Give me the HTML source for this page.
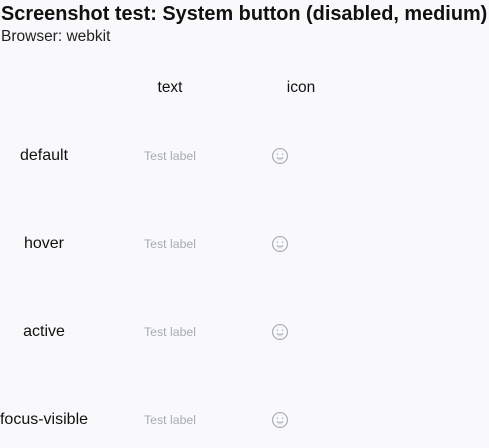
<!DOCTYPE html>
<html><head><style>
body{margin:0;background:#f9f9fb;font-family:"Liberation Sans",sans-serif;color:#111;width:489px;height:448px;overflow:hidden;position:relative}
.a{position:absolute;white-space:nowrap}
h1{position:absolute;left:1px;top:3px;margin:0;font-size:19.9px;font-weight:bold;white-space:nowrap}
.sub{left:1px;top:28px;font-size:15.5px;color:#222}
.hd{font-size:15.5px;top:79px;transform:translateX(-50%)}
.lb{font-size:16px;transform:translateX(-50%)}
.tl{font-size:12.3px;color:#a3abb5;transform:translateX(-50%)}
.ic{transform:translate(-50%,-50%)}
</style></head><body>
<h1>Screenshot test: System button (disabled, medium)</h1>
<div class="a sub">Browser: webkit</div>
<div class="a hd" style="left:170px">text</div>
<div class="a hd" style="left:301px">icon</div>
<div class="a lb" style="left:44px;top:147px">default</div>
<div class="a lb" style="left:44px;top:235px">hover</div>
<div class="a lb" style="left:44px;top:323px">active</div>
<div class="a lb" style="left:44px;top:411px">focus-visible</div>
<div class="a tl" style="left:170px;top:149px">Test label</div>
<div class="a tl" style="left:170px;top:237px">Test label</div>
<div class="a tl" style="left:170px;top:325px">Test label</div>
<div class="a tl" style="left:170px;top:413px">Test label</div>
<svg class="a ic" style="left:280px;top:156px" width="17" height="17" viewBox="0 0 16 16" fill="none" stroke="#a3abb5" stroke-width="1.1"><circle cx="8" cy="8" r="7"/><path d="M5 6.3h1.3M9.7 6.3H11M5 9.5q3 2.6 6 0"/></svg>
<svg class="a ic" style="left:280px;top:244px" width="17" height="17" viewBox="0 0 16 16" fill="none" stroke="#a3abb5" stroke-width="1.1"><circle cx="8" cy="8" r="7"/><path d="M5 6.3h1.3M9.7 6.3H11M5 9.5q3 2.6 6 0"/></svg>
<svg class="a ic" style="left:280px;top:332px" width="17" height="17" viewBox="0 0 16 16" fill="none" stroke="#a3abb5" stroke-width="1.1"><circle cx="8" cy="8" r="7"/><path d="M5 6.3h1.3M9.7 6.3H11M5 9.5q3 2.6 6 0"/></svg>
<svg class="a ic" style="left:280px;top:420px" width="17" height="17" viewBox="0 0 16 16" fill="none" stroke="#a3abb5" stroke-width="1.1"><circle cx="8" cy="8" r="7"/><path d="M5 6.3h1.3M9.7 6.3H11M5 9.5q3 2.6 6 0"/></svg>
</body></html>
